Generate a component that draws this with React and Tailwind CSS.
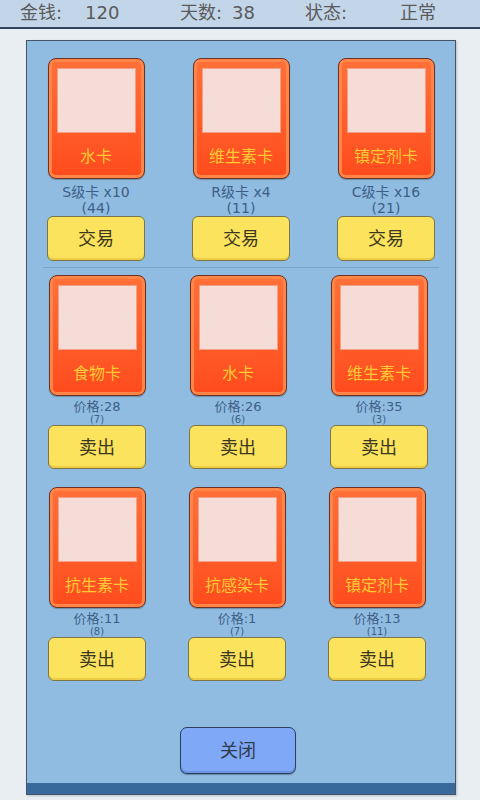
// 卡牌交易面板 — 顶部状态栏 + 交易/出售网格 + 关闭按钮
import React from 'react'

const FONT = { fontFamily: '"DejaVu Sans", "Noto Sans CJK SC", sans-serif' }

const tradeCards = [
  { name: '水卡', grade: 'S级卡 x10', count: 44 },
  { name: '维生素卡', grade: 'R级卡 x4', count: 11 },
  { name: '镇定剂卡', grade: 'C级卡 x16', count: 21 },
]

const sellRows = [
  {
    gap: 'gap-[43px]',
    items: [
      { name: '食物卡', price: 28, count: 7 },
      { name: '水卡', price: 26, count: 6 },
      { name: '维生素卡', price: 35, count: 3 },
    ],
  },
  {
    gap: 'gap-[42px]',
    items: [
      { name: '抗生素卡', price: 11, count: 8 },
      { name: '抗感染卡', price: 1, count: 7 },
      { name: '镇定剂卡', price: 13, count: 11 },
    ],
  },
]

function Card({ name }) {
  return (
    <div className="w-[97px] h-[121px] rounded-[8px] border border-[#6e3320] bg-gradient-to-b from-[#ff7038] to-[#ff4a1c] shadow-[inset_0_0_0_3px_#ff8548,0_1px_1px_rgba(0,0,0,0.25)] flex flex-col items-center pt-[10px]">
      <div className="w-[77px] h-[63px] bg-[#f5dcd6] shadow-[0_0_0_1px_#f2a184]" />
      <div className="mt-[15px] text-[16px] leading-[19px] text-[#ffc936]">{name}</div>
    </div>
  )
}

function YellowButton({ children, h }) {
  return (
    <button
      type="button"
      className={`w-[98px] ${h} rounded-[6px] border border-[#7d7448] bg-[#fbe35d] shadow-[inset_0_-2px_0_#eccd45] text-[18px] text-[#3b3720] flex items-center justify-center`}
    >
      {children}
    </button>
  )
}

function StatusBar() {
  return (
    <div className="h-[29px] bg-[#c3d6e9] border-b-2 border-[#2f435a] relative text-[18px] leading-[26px] text-[#5a5a5a]">
      <span className="absolute left-[20px] top-0">金钱:</span>
      <span className="absolute left-[85px] top-0">120</span>
      <span className="absolute left-[180px] top-0">天数:</span>
      <span className="absolute left-[232px] top-0">38</span>
      <span className="absolute left-[305px] top-0">状态:</span>
      <span className="absolute left-[400px] top-0">正常</span>
    </div>
  )
}

export default function App() {
  return (
    <div className="w-[480px] h-[800px] bg-[#e9eef3] overflow-hidden" style={FONT}>
      <StatusBar />
      <div className="ml-[26px] mt-[11px] w-[430px] h-[755px] border border-[#44546a] bg-[#90bce2] shadow-[1px_1px_2px_rgba(0,0,0,0.2)] flex flex-col">
        {/* 交易区 */}
        <div className="flex gap-[47px] pl-[20px] pt-[17px]">
          {tradeCards.map((c) => (
            <div key={c.name} className="w-[98px] flex flex-col items-center">
              <Card name={c.name} />
              <div className="mt-[5px] text-[14px] leading-[16px] text-[#3d5f86] text-center">
                <div>{c.grade}</div>
                <div>({c.count})</div>
              </div>
              <YellowButton h="h-[45px]">交易</YellowButton>
            </div>
          ))}
        </div>
        <div className="mx-[16px] mt-[6px] h-px bg-[#7aa3c8]" />

        {/* 出售区 */}
        {sellRows.map((row, ri) => (
          <div key={ri} className={`flex ${row.gap} pl-[21px] ${ri === 0 ? 'pt-[7px]' : 'pt-[18px]'}`}>
            {row.items.map((c) => (
              <div key={c.name} className="w-[98px] flex flex-col items-center">
                <Card name={c.name} />
                <div className="mt-[3px] text-center text-[#3d5f86]">
                  <div className="text-[13px] leading-[15px]">价格:{c.price}</div>
                  <div className="text-[10px] leading-[11px]">({c.count})</div>
                </div>
                <YellowButton h="h-[44px]">卖出</YellowButton>
              </div>
            ))}
          </div>
        ))}

        <div className="flex-1 flex items-start justify-center pt-[46px] pr-[6px]">
          <button
            type="button"
            className="w-[116px] h-[47px] rounded-[7px] border border-[#2d3f5e] bg-[#7fa9f7] shadow-[inset_0_-2px_0_#6c95e4,0_1px_1px_rgba(0,0,0,0.3)] text-[18px] text-[#2f3a4c]"
          >
            关闭
          </button>
        </div>
        <div className="h-[11px] bg-[#386a9c]" />
      </div>
    </div>
  )
}
